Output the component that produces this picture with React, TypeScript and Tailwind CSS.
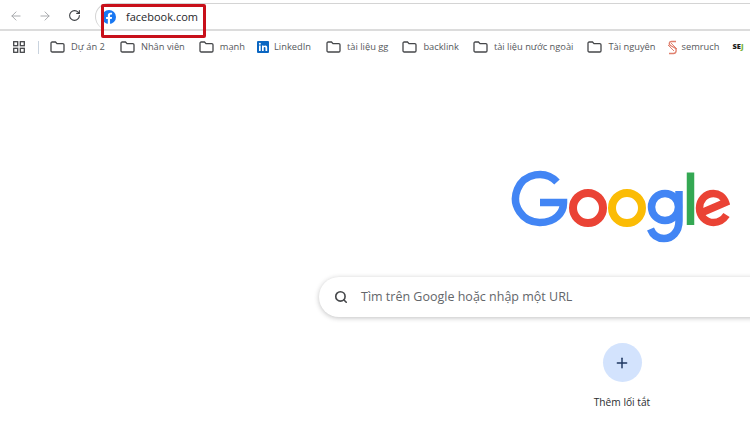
import { ArrowLeft, ArrowRight, RotateCw, Search, Plus } from "lucide-react";

const font = { fontFamily: "'Open Sans', 'Noto Sans', sans-serif" };

function Folder() {
  return (
    <svg width="15" height="12" viewBox="0 0 15 12" fill="none" stroke="#45474a" strokeWidth="1.3" className="shrink-0">
      <path d="M1 2.200c0-.7.5-1.200 1.200-1.200h3.300l1.500 1.600h5.800c.7 0 1.200.5 1.200 1.200v6c0 .7-.5 1.200-1.200 1.200H2.200c-.7 0-1.200-.5-1.200-1.200z" />
    </svg>
  );
}

function Bookmark({ label, icon, className }: { label: string; icon?: React.ReactNode; className?: string }) {
  return (
    <div className={`flex items-center gap-[6px] shrink-0 ${className ?? ""}`}>
      {icon ?? <Folder />}
      <span className="text-[9.300px] leading-none text-[#55585c] whitespace-nowrap">{label}</span>
    </div>
  );
}

function GoogleLogo() {
  return (
    <svg width="220" height="74" viewBox="0 0 220 74" fill="none">
      {/* G */}
      <path d="M46 12A24 24 0 1 0 29 52.500C44 52.500 52.500 43 52.500 33V32.500H29" stroke="#4285f4" strokeWidth="7.500" />
      {/* first o */}
      <circle cx="77" cy="38" r="15" stroke="#ea4335" strokeWidth="8" />
      {/* second o */}
      <circle cx="116" cy="38" r="15" stroke="#fbbc05" strokeWidth="8" />
      {/* g */}
      <circle cx="154" cy="37" r="13.500" stroke="#4285f4" strokeWidth="7.500" />
      <path d="M168 21V51C168 62 161 68.500 153 68.500C146 68.500 141.500 64 139.500 59" stroke="#4285f4" strokeWidth="7.500" />
      {/* l */}
      <path d="M179.500 2.500V55" stroke="#34a853" strokeWidth="7.500" />
      {/* e */}
      <path d="M190 43L214.500 32.500C212.500 26.500 207.500 23.500 202.500 23.500C194.500 23.500 188.500 30 188.500 38C188.500 46 194.500 52.500 202.500 52.500C208 52.500 212.500 49.500 215.500 45" stroke="#ea4335" strokeWidth="7.500" />
    </svg>
  );
}

export default function App() {
  return (
    <div className="relative w-[750px] h-[438px] overflow-hidden bg-white" style={font}>
      {/* Toolbar */}
      <div className="flex items-center h-[31px] border-b-2 border-[#dcdcdc] pl-[9px]">
        <ArrowLeft size={14} strokeWidth={1.6} className="text-[#a3a5a8] mr-[15px] mt-[2px]" />
        <ArrowRight size={14} strokeWidth={1.6} className="text-[#a3a5a8] mr-[16px] mt-[2px]" />
        <RotateCw size={13} strokeWidth={2} className="text-[#3c3f43] mt-[2px]" />
        <div className="ml-[14px] flex-1 h-[27px] mt-[3px] rounded-l-[14px] border-t border-l border-[#d4d4d4] flex items-center pl-[6px]">
          <svg width="14" height="14" viewBox="0 0 24 24" className="shrink-0">
            <circle cx="12" cy="12" r="12" fill="#1877f2" />
            <path fill="#fff" d="M16.700 15.500l.5-3.500h-3.400V9.800c0-1 .5-1.900 2-1.900h1.500V5c0 0-1.400-.2-2.700-.2-2.800 0-4.600 1.700-4.600 4.700V12H7v3.500h3v8.400a12 12 0 0 0 3.800 0v-8.400z" />
          </svg>
          <span className="ml-[10px] text-[11px] leading-none text-[#26282b]">facebook.com</span>
        </div>
      </div>

      {/* Bookmarks bar */}
      <div className="flex items-center h-[32px] pl-[13px]">
        <svg width="12" height="12" viewBox="0 0 12 12" fill="none" stroke="#45474a" strokeWidth="1.300" className="shrink-0">
          <rect x="0.700" y="0.700" width="4" height="4" />
          <rect x="7.300" y="0.700" width="4" height="4" />
          <rect x="0.700" y="7.300" width="4" height="4" />
          <rect x="7.300" y="7.300" width="4" height="4" />
        </svg>
        <div className="w-px h-[13px] bg-[#c9d3de] ml-[13px] mr-[11px]" />
        <div className="flex items-center gap-[14px]">
          <Bookmark label="Dự án 2" />
          <Bookmark label="Nhân viên" className="ml-[1px]" />
          <Bookmark label="mạnh" />
          <Bookmark
            label="LinkedIn"
            className="!gap-[5px] -ml-[2px]"
            icon={
              <svg width="12" height="12" viewBox="0 0 12 12" className="shrink-0">
                <rect width="12" height="12" rx="1" fill="#0a66c2" />
                <rect x="2" y="4.500" width="1.700" height="5.500" fill="#fff" />
                <circle cx="2.850" cy="2.800" r="1" fill="#fff" />
                <path fill="#fff" d="M5 4.500h1.600v.8c.4-.6 1-.9 1.700-.9 1.300 0 1.900.8 1.900 2.200V10H8.500V7c0-.7-.3-1.100-.9-1.100-.6 0-.9.4-.9 1.100v3H5z" />
              </svg>
            }
          />
          <Bookmark label="tài liệu gg" className="ml-[1px]" />
          <Bookmark label="backlink" />
          <Bookmark label="tài liệu nước ngoài" />
          <Bookmark label="Tài nguyên" />
          <Bookmark
            label="semruch"
            className="!gap-[3px] -ml-[4px]"
            icon={
              <svg width="13" height="15" viewBox="0 0 13 15" fill="none" stroke="#e0806e" strokeWidth="1.400" className="shrink-0">
                <path d="M10 1.500H5.500C3 1.500 2.500 4.500 4.500 5.500L9 8C11 9.200 10.500 13.500 7.500 13.500H3" />
                <path d="M2 5L8 11M5 3L11 9" strokeWidth="1" />
              </svg>
            }
          />
          <span className="-ml-[1px] text-[7.500px] leading-none font-extrabold text-[#1c1c1c] shrink-0">
            SE<span className="text-[#7cb342]">J</span>
          </span>
        </div>
      </div>

      {/* Logo */}
      <div className="ml-[511px] mt-[107px]">
        <GoogleLogo />
      </div>

      {/* Search box */}
      <div className="ml-[319px] mt-[33px] w-[520px] h-[40px] rounded-[20px] bg-white shadow-[0_1px_5px_rgba(32,33,36,0.28)] flex items-center pl-[15px]">
        <Search size={14} strokeWidth={2.800} className="text-[#45474a]" />
        <span className="ml-[13px] text-[12.500px] leading-none text-[#63666a]">Tìm trên Google hoặc nhập một URL</span>
      </div>

      {/* Shortcut */}
      <div className="ml-[582px] mt-[26px] w-[80px] flex flex-col items-center">
        <div className="w-[39px] h-[39px] rounded-full bg-[#d3e3fd] flex items-center justify-center">
          <Plus size={16} strokeWidth={2.200} className="text-[#1f3760]" />
        </div>
        <span className="mt-[15px] text-[10.200px] leading-none text-[#2b2d30] whitespace-nowrap">Thêm lối tắt</span>
      </div>

      {/* Red annotation box */}
      <div className="absolute left-[101px] top-[4px] w-[105px] h-[34px] border-[3px] border-[#c8101a] rounded-[2px]" />
    </div>
  );
}
